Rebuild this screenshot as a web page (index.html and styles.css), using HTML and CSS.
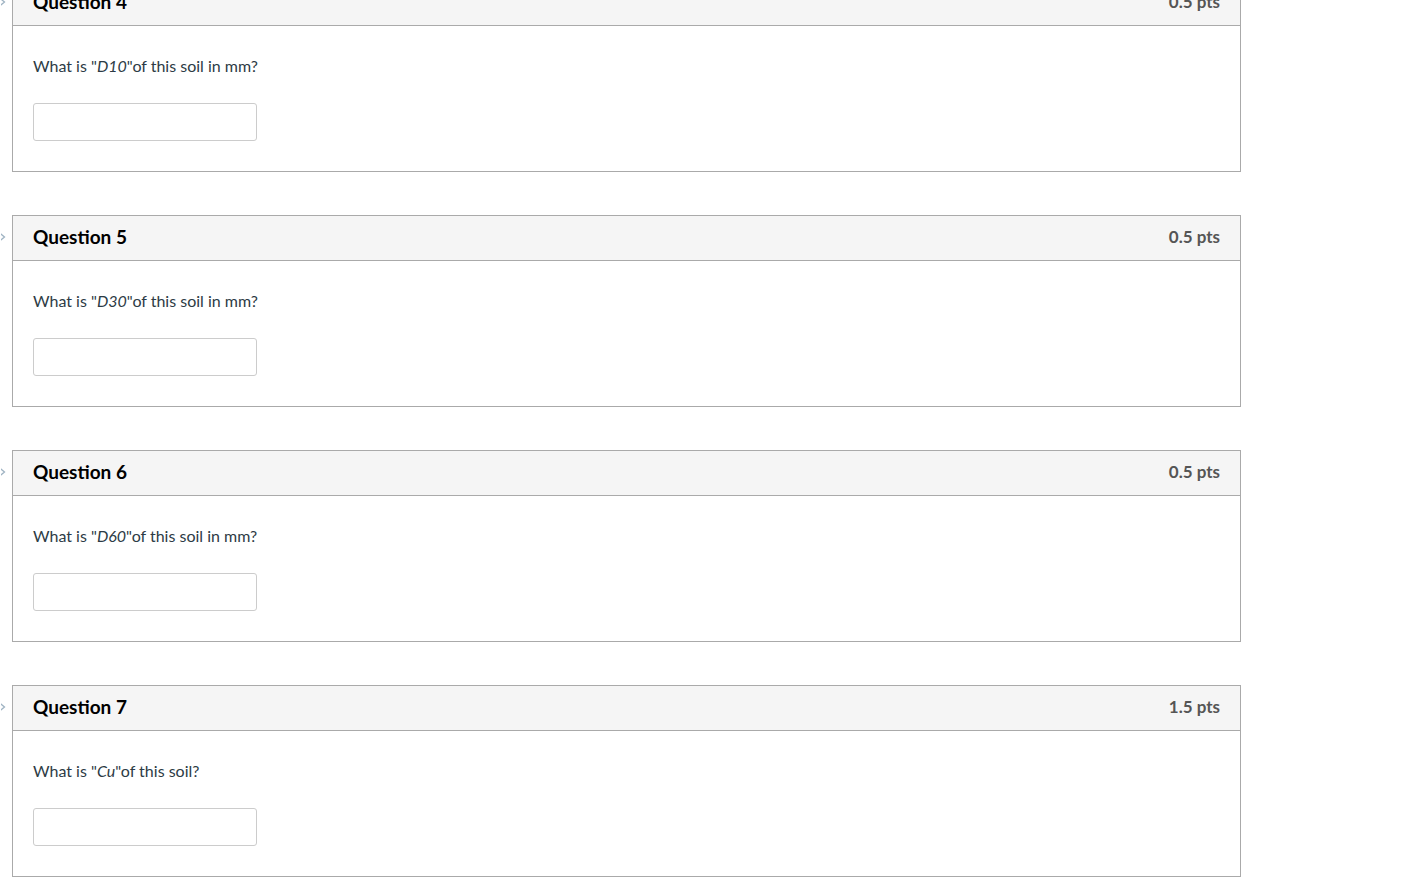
FILE: index.html
```html
<!DOCTYPE html>
<html lang="en">
<head>
<meta charset="utf-8">
<title>Quiz</title>
<link rel="stylesheet" href="styles.css">
</head>
<body>
<div class="quiz">
  <div class="question">
    <svg class="flag" width="8" height="12" viewBox="0 0 8 12"><path d="M-2 1.5 L3.5 6 L-2 10.5" fill="none" stroke="#9fb3c3" stroke-width="1.3"/></svg>
    <div class="q-header"><span class="q-title">Question 4</span><span class="q-pts">0.5 pts</span></div>
    <div class="q-body">
      <p class="q-text">What is "<em>D10</em>"of this soil in mm?</p>
      <input class="q-input" type="text">
    </div>
  </div>
  <div class="question">
    <svg class="flag" width="8" height="12" viewBox="0 0 8 12"><path d="M-2 1.5 L3.5 6 L-2 10.5" fill="none" stroke="#9fb3c3" stroke-width="1.3"/></svg>
    <div class="q-header"><span class="q-title">Question 5</span><span class="q-pts">0.5 pts</span></div>
    <div class="q-body">
      <p class="q-text">What is "<em>D30</em>"of this soil in mm?</p>
      <input class="q-input" type="text">
    </div>
  </div>
  <div class="question">
    <svg class="flag" width="8" height="12" viewBox="0 0 8 12"><path d="M-2 1.5 L3.5 6 L-2 10.5" fill="none" stroke="#9fb3c3" stroke-width="1.3"/></svg>
    <div class="q-header"><span class="q-title">Question 6</span><span class="q-pts">0.5 pts</span></div>
    <div class="q-body">
      <p class="q-text">What is "<em>D60</em>"of this soil in mm?</p>
      <input class="q-input" type="text">
    </div>
  </div>
  <div class="question">
    <svg class="flag" width="8" height="12" viewBox="0 0 8 12"><path d="M-2 1.5 L3.5 6 L-2 10.5" fill="none" stroke="#9fb3c3" stroke-width="1.3"/></svg>
    <div class="q-header"><span class="q-title">Question 7</span><span class="q-pts">1.5 pts</span></div>
    <div class="q-body">
      <p class="q-text">What is "<em>Cu</em>"of this soil?</p>
      <input class="q-input" type="text">
    </div>
  </div>
</div>
</body>
</html>
```
FILE: styles.css
```css
html, body {
  margin: 0;
  padding: 0;
  background: #fff;
  overflow: hidden;
}
body {
  font-family: Lato, "Open Sans", "Liberation Sans", sans-serif;
  color: #2d3b45;
}
.quiz {
  display: flex;
  flex-direction: column;
  gap: 43px;
  margin-top: -20px;
  margin-left: 12px;
  width: 1229px;
}
.question {
  position: relative;
  border: 1px solid #aaaaaa;
  background: #fff;
}
.flag {
  position: absolute;
  left: -12px;
  top: 15px;
}
.q-header {
  display: flex;
  justify-content: space-between;
  align-items: center;
  height: 45px;
  box-sizing: border-box;
  padding: 0 20px 4px;
  background: #f5f5f5;
  border-bottom: 1px solid #aaaaaa;
}
.q-title {
  font-size: 19px;
  font-weight: 700;
  color: #000;
}
.q-pts {
  font-size: 17px;
  font-weight: 700;
  color: #555;
}
.q-body {
  padding: 28px 20px 30px;
}
.q-text {
  margin: 0 0 25px;
  font-size: 16px;
  line-height: 24px;
  color: #2d3b45;
}
.q-text em {
  font-style: italic;
}
.q-input {
  display: block;
  box-sizing: border-box;
  width: 224px;
  height: 38px;
  margin: 0;
  border: 1px solid #cccccc;
  border-radius: 3px;
  background: #fff;
  font-family: inherit;
  font-size: 14px;
}
```
